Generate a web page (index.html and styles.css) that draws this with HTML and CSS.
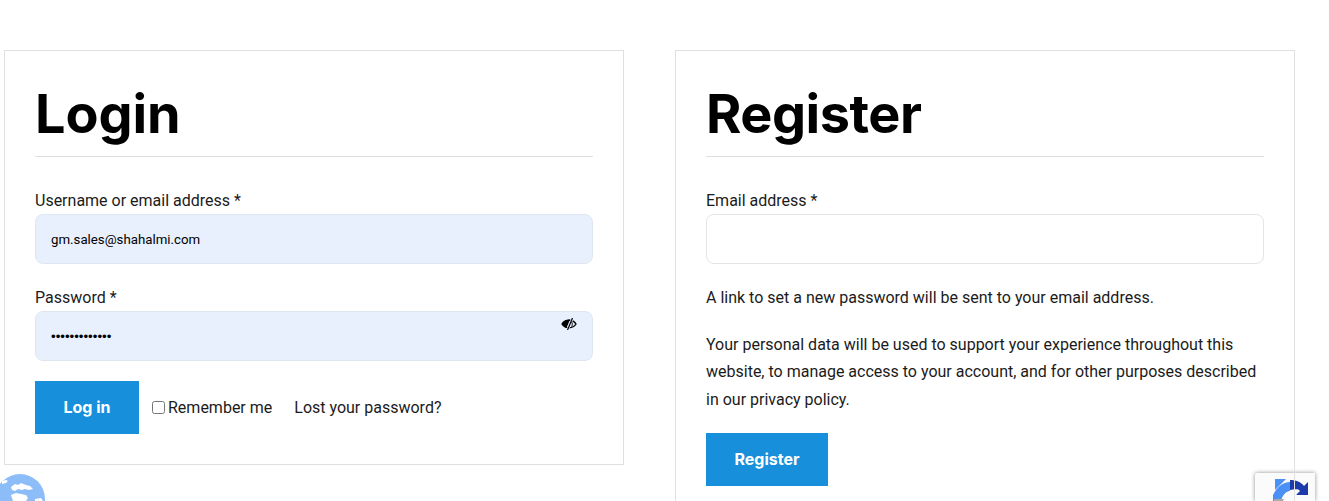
FILE: index.html
```html
<!DOCTYPE html>
<html lang="en">
<head>
<meta charset="utf-8">
<title>My account</title>
<link rel="stylesheet" href="styles.css">
</head>
<body>
<div class="recaptcha">
  <svg class="recaptcha-logo" viewBox="0 0 36 22" aria-hidden="true">
    <path fill="#4a90f5" d="M18 3C11 3 5 8 1 16v6h8c1-5 4-9 9-10z"/>
    <path fill="#4a90f5" d="M3 0h11L3 11z"/>
    <path fill="#1c3aa9" d="M18 1c6 0 11 2 14 6l4-4v13H24l4-4c-3-3-6-1-10-1z"/>
    <path fill="#fbfbfb" d="M11 22c0-6 3-10 8-10s6 3 5 6l-2 4z"/>
    <path fill="#ababab" d="M2 20h10l-1 2H2z"/>
  </svg>
</div>
<main class="columns">
  <section class="card card-login">
    <h2 class="title">Login</h2>
    <form class="form">
      <label class="label">Username or email address *</label>
      <div class="input filled"><span class="value">gm.sales@shahalmi.com</span></div>
      <label class="label label-next">Password *</label>
      <div class="input filled">
        <span class="value dots">•••••••••••••</span>
        <svg class="eye" viewBox="0 0 16 12" aria-hidden="true">
          <path fill="none" stroke="#000" stroke-width="1.4" d="M1 6c3-5 11-5 14 0-3 5-11 5-14 0z"/>
          <path fill="#000" d="M1 6c2-3 5-4.500 8-4.500L5.500 10C3.500 9.500 2 8 1 6z"/>
          <path fill="none" stroke="#e8f0fe" stroke-width="2.400" d="M11.500 0L6.500 12"/>
          <path fill="none" stroke="#000" stroke-width="1.200" d="M11.500 0L6.500 12"/>
          <path fill="none" stroke="#000" stroke-width="1" d="M10.500 8.500c1-1 1-3 .2-4.500"/>
        </svg>
      </div>
      <div class="actions">
        <button class="button button-login" type="button">Log in</button>
        <label class="remember"><input class="check" type="checkbox">Remember me</label>
        <a class="lost">Lost your password?</a>
      </div>
    </form>
  </section>
  <section class="card card-register">
    <h2 class="title title-register">Register</h2>
    <form class="form">
      <label class="label">Email address *</label>
      <div class="input"></div>
      <p class="note">A link to set a new password will be sent to your email address.</p>
      <p class="privacy">Your personal data will be used to support your experience throughout this website, to manage access to your account, and for other purposes described in our privacy policy.</p>
      <button class="button button-register" type="button">Register</button>
    </form>
  </section>
</main>
<svg class="globe" viewBox="0 0 50 27" aria-hidden="true">
  <circle cx="25" cy="25" r="25" fill="#8dbdf9"/>
  <path fill="#fff" d="M7 7l4-1 2 1-2 2-4 1z"/>
  <path fill="#fff" d="M16 13l4-3 3 1 3-2 5 2 4 1 3 3-4 1-4-1-3 1-4-1-3 2-3-1z"/>
  <path fill="#fff" d="M16 21l5-2 5 1 5 1 2 3-2 3H18z"/>
  <path fill="#fff" d="M40 25l6-1 2 3h-8z"/>
</svg>
</body>
</html>
```
FILE: styles.css
```css
html, body {
  margin: 0;
  padding: 0;
  height: 501px;
  overflow: hidden;
  background: #fff;
}
body {
  position: relative;
  font-family: Roboto, "Liberation Sans", sans-serif;
  font-size: 16px;
  color: #1b1b1b;
}
.columns {
  position: relative;
  box-sizing: border-box;
  height: 501px;
  overflow: hidden;
  display: flex;
  align-items: flex-start;
  gap: 51px;
  padding: 50px 0 0 4px;
}
.card {
  box-sizing: border-box;
  width: 620px;
  padding: 30px;
  border: 1px solid #e0e0e0;
  flex: none;
}
.title {
  margin: 0 0 31px;
  padding-bottom: 11px;
  height: 64px;
  border-bottom: 1px solid #dfdfdf;
  font-family: Inter, "Liberation Sans", sans-serif;
  font-size: 54px;
  line-height: 65px;
  font-weight: 700;
  letter-spacing: -0.1px;
  color: #000;
}
.title-register {
  letter-spacing: -0.5px;
}
.form {
  display: flex;
  flex-direction: column;
  align-items: stretch;
}
.label {
  display: block;
  line-height: 26px;
  margin-bottom: 0;
}
.label-next {
  margin-top: 21px;
}
.input {
  position: relative;
  box-sizing: border-box;
  height: 50px;
  border: 1px solid #e2e4e8;
  border-radius: 8px;
  padding: 0 15px;
  display: flex;
  align-items: center;
  background: #fff;
}
.filled {
  background: #e8f0fe;
  border-color: #e0e6f1;
}
.value {
  font-size: 13.25px;
  color: #000;
}
.dots {
  font-family: "Liberation Sans", sans-serif;
}
.eye {
  position: absolute;
  top: 6px;
  right: 15px;
  width: 16px;
  height: 12px;
}
.actions {
  display: flex;
  align-items: center;
  margin-top: 20px;
}
.button {
  border: 0;
  border-radius: 0;
  height: 53px;
  background: #178fdb;
  color: #fff;
  font-family: Inter, "Liberation Sans", sans-serif;
  font-size: 16px;
  font-weight: 700;
  padding: 0 0 2px;
}
.button-login {
  width: 104px;
}
.button-register {
  width: 122px;
  margin-top: 20px;
}
.remember {
  display: flex;
  align-items: center;
  margin-left: 13px;
}
.check {
  width: 13px;
  height: 13px;
  margin: 0 3px 0 0;
}
.lost {
  margin-left: 22px;
}
.note {
  margin: 20px 0 0;
  line-height: 27px;
}
.privacy {
  margin: 20px 0 0;
  line-height: 27.35px;
}
.globe {
  position: absolute;
  left: -5px;
  top: 474px;
  width: 50px;
  height: 27px;
}
.recaptcha {
  position: absolute;
  left: 1255px;
  top: 473px;
  width: 60px;
  height: 28px;
  background: #fbfbfb;
  box-shadow: 0 0 4px rgba(0, 0, 0, 0.45);
  border-radius: 2px 0 0 0;
}
.recaptcha-logo {
  position: absolute;
  left: 17px;
  top: 6px;
  width: 36px;
  height: 22px;
}
```
